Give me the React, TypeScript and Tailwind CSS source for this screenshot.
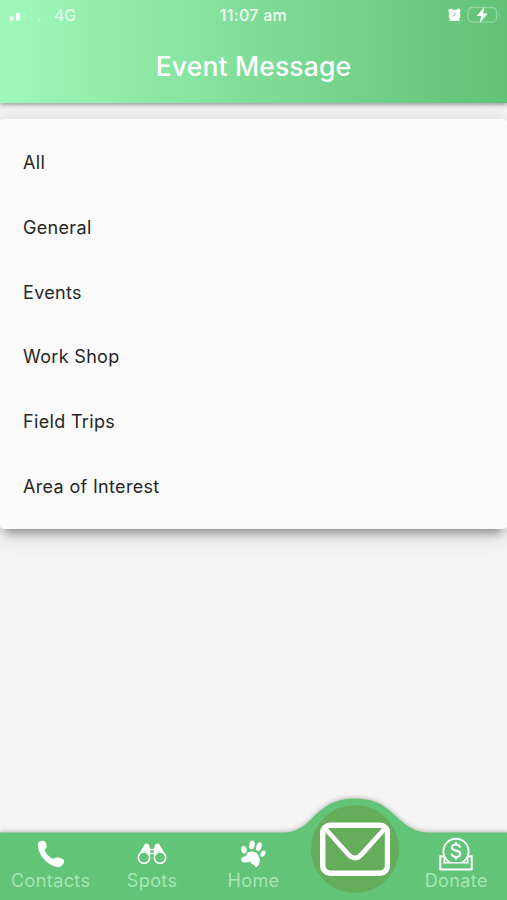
import React from 'react';

const CATEGORIES = ['All', 'General', 'Events', 'Work Shop', 'Field Trips', 'Area of Interest'];

const PhoneIcon: React.FC = () => (
  <svg width="28" height="28" viewBox="0 0 28 28" fill="#fff">
    <path d="M1 3.6C1.5 1.3 4.9-.1 7.200 1.100C9.500 2.500 10.200 6 9.300 7.800C8.800 8.900 7.400 9.400 7.800 10.500C9.200 14 12.200 17 15.700 18.600C17.100 19.200 18 17.500 19.400 17.400C22 17.200 26.200 18.300 27 20.300C27.800 23 24.600 26.500 22.200 26.900C17.500 27.600 10.600 23.800 6.600 18.800C2.700 14 .2 7.500 1 3.600Z" />
  </svg>
);

const BinocularsIcon: React.FC = () => (
  <svg width="30" height="22" viewBox="0 0 30 22" fill="none" stroke="#fff">
    <circle cx="7" cy="14.700" r="5.700" strokeWidth="1.700" />
    <circle cx="23" cy="14.700" r="5.700" strokeWidth="1.700" />
    <path d="M.8 13L6 4.200L8 1Q10-.3 11.700 1.500L13 5L13.500 12Q11 7.900 7 8.200Q3 8.500.8 13ZM29.200 13L24 4.200L22 1Q20-.3 18.300 1.500L17 5L16.500 12Q19 7.900 23 8.200Q27 8.500 29.200 13Z" fill="#fff" stroke="none" />
    <path d="M12 6.500H18M12.500 10.500H17.500" strokeWidth="1.700" />
  </svg>
);

const PawIcon: React.FC = () => (
  <svg width="26" height="28" viewBox="0 0 26 28" fill="#fff">
    <ellipse cx="4" cy="9.800" rx="2.700" ry="3.800" transform="rotate(-12 4 9.800)" />
    <ellipse cx="12" cy="4.900" rx="2.700" ry="4.500" transform="rotate(8 12 4.900)" />
    <ellipse cx="18.900" cy="6.600" rx="2.600" ry="4.500" transform="rotate(18 18.900 6.600)" />
    <ellipse cx="23" cy="13.700" rx="2.200" ry="3.400" transform="rotate(32 23 13.700)" />
    <path d="M8.500 12.200Q12 10.600 15 12.200Q18 13 18.600 16.500Q20.500 19 19.500 22Q19.300 25.500 15.800 27.600L14.500 25.200L11.500 23.800L10 21.800L6.500 22.300Q1.500 23.200 1.200 19.200Q1.500 16.500 5 16.500Q6.500 16 6.900 14Q7.300 12.600 8.500 12.200Z" />
  </svg>
);

const DonateIcon: React.FC = () => (
  <svg width="34" height="34" viewBox="0 0 34 34" fill="none" stroke="#fff" strokeWidth="1.900">
    <path d="M10.500 25.200A12.600 12.600 0 1 1 23.500 25.200" />
    <path d="M5 19.300H1.300V32.500H32.700V19.300H29" />
    <path d="M5.300 19V25.700H28.700V19" strokeWidth="1.600" />
    <path d="M21 10.500C20.500 8.300 19 7.500 17 7.500C14.700 7.500 13 8.800 13 10.700C13 14.900 21.200 12.200 21.200 16.800C21.200 18.900 19.500 20 17.200 20C14.700 20 13 18.900 12.700 16.700M17 5.100V7.500M17 20V22.400" strokeWidth="2.200" />
  </svg>
);

const MailIcon: React.FC = () => (
  <svg width="70" height="54" viewBox="0 0 70 54" fill="none" stroke="#fff" strokeWidth="5.400" strokeLinejoin="round">
    <rect x="2.700" y="3.200" width="64.800" height="48" rx="7.500" />
    <path d="M5.500 7L28.500 32.500Q35 39.500 41.500 32.500L64.500 7" strokeWidth="4.800" />
  </svg>
);

const StatusBar: React.FC = () => (
  <div className="grid h-[30px] grid-cols-3 items-center px-[10px] text-[16px] leading-none text-white/80">
    <div className="flex items-center">
      <svg width="34" height="14" viewBox="0 0 34 14" fill="#fff">
        <rect x="0" y="8.500" width="3.600" height="4" rx="1" />
        <rect x="6" y="5" width="4" height="7.500" rx="1" />
        <rect x="13" y="2.500" width="3.600" height="10" rx="1" opacity=".1" />
        <rect x="19" y="0" width="3.600" height="12.500" rx="1" opacity=".08" />
        <path d="M28 10L31 12.500H29Z" opacity=".55" />
      </svg>
      <span className="ml-[10px]">4G</span>
    </div>
    <span className="text-center font-medium tracking-[0.3px] whitespace-nowrap text-white/90">11:07 am</span>
    <div className="-mr-[4px] flex items-center justify-end gap-[6px]">
      <svg width="13" height="14" viewBox="0 0 13 14">
        <path d="M.2 3Q.5.8 3 .5L4.500 1.800H8.500L10 .5Q12.500.8 12.800 3L11.600 4.700Q13.200 8.500 11 11.200L12 13H10.400L9.300 12.400Q6.500 13.500 3.700 12.400L2.600 13H1L2 11.200Q-.2 8.500 1.400 4.700Z" fill="#fff" />
        <path d="M7.200 4.500L6.600 7.600L4.600 8.200" fill="none" stroke="#69c97d" strokeWidth=".8" />
      </svg>
      <svg className="-mt-px" width="34" height="18" viewBox="0 0 34 18">
        <rect x="1" y="1.500" width="28.500" height="14.500" rx="4" fill="none" stroke="#fff" strokeOpacity=".3" strokeWidth="1.300" />
        <path d="M31.500 6.500Q33.500 8.700 31.500 11Z" fill="#fff" opacity=".25" />
        <path d="M17.500.8L9.700 10H14.200L12.700 17L20.800 7.500H16.100Z" fill="#fff" />
      </svg>
    </div>
  </div>
);

const NAV_ITEMS = [
  { label: 'Contacts', icon: <PhoneIcon /> },
  { label: 'Spots', icon: <BinocularsIcon /> },
  { label: 'Home', icon: <PawIcon /> },
  { label: 'Messages', icon: <MailIcon />, active: true },
  { label: 'Donate', icon: <DonateIcon /> },
];

const BottomNav: React.FC = () => (
  <nav className="relative h-[68px]">
    {/* Bar with the bump behind the active tab */}
    <svg
      className="absolute bottom-0 left-0 drop-shadow-[0_-1px_2px_rgba(0,0,0,0.25)]"
      width="507"
      height="102"
      viewBox="0 0 507 102"
    >
      <path d="M0 34.500H283C302 34.500 309 22 320 13C330 4 342 .5 355 .5C368 .5 380 4 390 13C401 22 410 34.500 429 34.500H507V102H0Z" fill="#61c476" />
    </svg>
    <div className="relative grid h-full grid-cols-5">
      {NAV_ITEMS.map((item) =>
        item.active ? (
          <button
            key={item.label}
            aria-label={item.label}
            className="-mt-[27px] flex h-[88px] w-[88px] items-center justify-center justify-self-center rounded-full bg-[#66ad5b]"
          >
            {item.icon}
          </button>
        ) : (
          <button key={item.label} className="flex flex-col items-center pt-[4px]">
            <span className="flex h-[35px] items-center justify-center">{item.icon}</span>
            <span className="text-[18px] leading-[20px] tracking-[0.4px] text-[#a9e5b4]">{item.label}</span>
          </button>
        )
      )}
    </div>
  </nav>
);

const App: React.FC = () => {
  return (
    <div className="flex h-[900px] w-[507px] flex-col overflow-hidden bg-[#f5f5f5] font-['Inter',sans-serif]">
      {/* Header */}
      <header className="relative z-10 h-[103px] shrink-0 bg-linear-to-r from-[#9ff8bc] to-[#61c275] shadow-[0_2px_4px_rgba(0,0,0,0.35)]">
        <StatusBar />
        <h1 className="pt-[17px] text-center text-[26.5px] leading-[38px] font-medium tracking-[0.15px] text-white">
          Event Message
        </h1>
      </header>

      <main className="flex-1 bg-[#f5f5f5] pt-[16px]">
        <ul className="flex h-[410px] flex-col rounded-[4px] bg-[#fafafa] pt-[11.2px] pb-[10.2px] shadow-[0_8px_10px_-5px_rgba(0,0,0,0.4),0_4px_24px_2px_rgba(0,0,0,0.14)]">
          {CATEGORIES.map((category) => (
            <li key={category} className="flex flex-1 items-center px-[23px] text-[18px] tracking-[0.33px] text-[#262626]">
              {category}
            </li>
          ))}
        </ul>
      </main>

      <BottomNav />
    </div>
  );
};

export default App;
